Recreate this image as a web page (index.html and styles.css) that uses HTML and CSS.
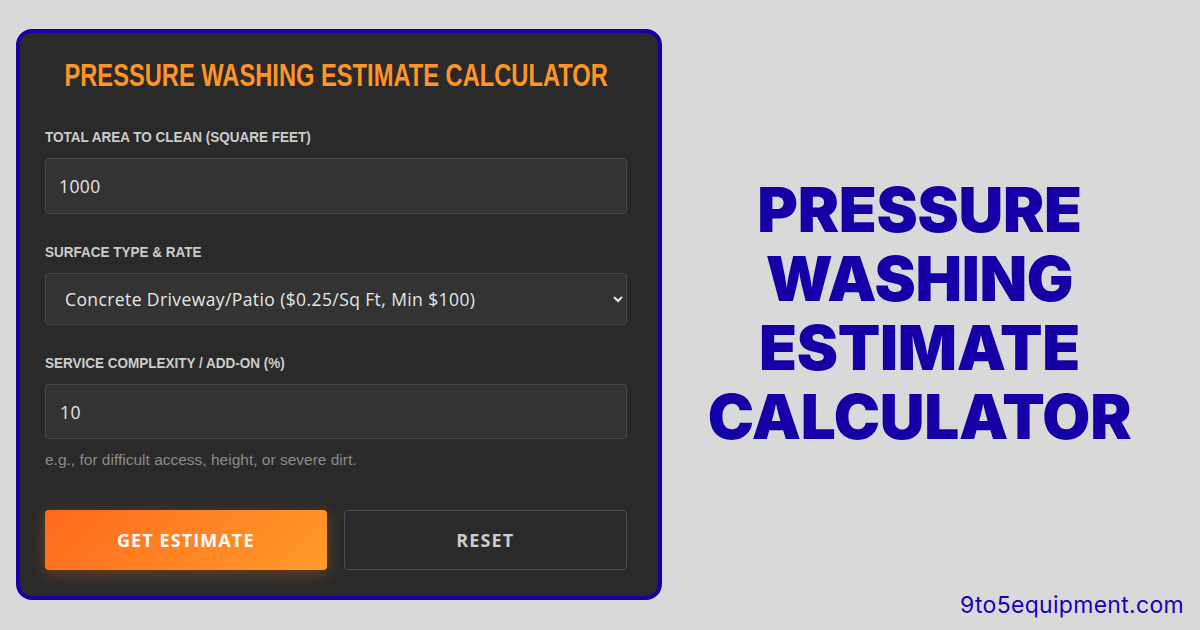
FILE: index.html
```html
<!DOCTYPE html>
<html lang="en">
<head>
    <meta charset="UTF-8">
    <title>Pressure Washing Estimate Calculator</title>
    <link rel="stylesheet" href="styles.css">
</head>
<body>

    <!-- calculator card -->
    <div class="calc-card">
        <h2 class="calc-title"><span>PRESSURE WASHING ESTIMATE CALCULATOR</span></h2>

        <div class="field">
            <label class="field-label"><span>TOTAL AREA TO CLEAN (SQUARE FEET)</span></label>
            <div class="field-box">1000</div>
        </div>

        <div class="field">
            <label class="field-label"><span>SURFACE TYPE &amp; RATE</span></label>
            <div class="field-box select-box">
                <span>Concrete Driveway/Patio ($0.25/Sq Ft, Min $100)</span>
                <svg class="chevron" width="10" height="7" viewBox="0 0 10 7">
                    <path d="M1.5 1.5 L5 5 L8.5 1.5" fill="none" stroke="#eee" stroke-width="2" stroke-linecap="round"/>
                </svg>
            </div>
        </div>

        <div class="field">
            <label class="field-label"><span>SERVICE COMPLEXITY / ADD-ON (%)</span></label>
            <div class="field-box short-box">10</div>
            <div class="field-hint">e.g., for difficult access, height, or severe dirt.</div>
        </div>

        <div class="buttons">
            <button class="btn btn-main">GET ESTIMATE</button>
            <button class="btn btn-reset">RESET</button>
        </div>
    </div>

    <!-- headline -->
    <div class="headline">
        <h1>PRESSURE<br>WASHING<br>ESTIMATE<br>CALCULATOR</h1>
    </div>

    <div class="site">9to5equipment.com</div>

</body>
</html>
```

FILE: styles.css
```css
body {
    margin: 0;
    width: 1200px;
    height: 630px;
    background-color: #d9d9d9;
    display: flex;
    align-items: flex-start;
    font-family: "Open Sans", sans-serif;
    position: relative;
    overflow: hidden;
}

/* 卡片 */
.calc-card {
    width: 646px;
    height: 571px;
    box-sizing: border-box;
    margin: 29px 0 0 16px;
    padding: 0 31px 0 25px;
    background-color: #2a2a2a;
    border: 4px solid #1500a8;
    border-radius: 16px;
}

.calc-title {
    display: flex;
    justify-content: center;
    margin: 24px 0 36px;
    color: #ff9526;
    font-family: "Liberation Sans", Arial, sans-serif;
    font-size: 32px;
    font-weight: bold;
    line-height: 36px;
    white-space: nowrap;
}

/* 窄体文字 */
.calc-title span {
    display: inline-block;
    transform: scaleX(0.74);
}

.field {
    margin-bottom: 30px;
}

.field-label {
    display: block;
    margin-bottom: 13px;
    color: #cccccc;
    font-family: "Liberation Sans", Arial, sans-serif;
    font-size: 15px;
    font-weight: bold;
    line-height: 16px;
    white-space: nowrap;
}

.field-label span {
    display: inline-block;
    transform: scaleX(0.9);
    transform-origin: left;
}

.field-box {
    height: 56px;
    box-sizing: border-box;
    display: flex;
    align-items: center;
    padding: 0 13px;
    background-color: #333333;
    border: 1px solid #474747;
    border-radius: 4px;
    color: #e6e6e6;
    font-size: 17.5px;
    letter-spacing: 0.4px;
}

.select-box {
    height: 52px;
    padding: 0 3px 0 19px;
    justify-content: space-between;
}

.short-box {
    height: 55px;
    padding: 0 14px;
}

.field-hint {
    margin-top: 12px;
    color: #8a8a8a;
    font-family: "Liberation Sans", Arial, sans-serif;
    font-size: 15.5px;
    line-height: 18px;
}

.buttons {
    display: flex;
    gap: 17px;
    margin-top: 41px;
}

.btn {
    flex: 1;
    height: 60px;
    border-radius: 4px;
    font-family: "Open Sans", sans-serif;
    font-size: 18px;
    font-weight: bold;
    letter-spacing: 1.1px;
    cursor: pointer;
}

.btn-main {
    border: none;
    color: white;
    background: linear-gradient(135deg, #ff6a1c, #ff9b2b);
    box-shadow: 0 4px 15px rgba(255, 120, 30, 0.3);
}

.btn-reset {
    background-color: #2a2a2a;
    border: 1px solid #4e4e4e;
    color: #cccccc;
}

/* 右侧标题 */
.headline {
    flex: 1;
    text-align: center;
    padding-top: 175px;
    padding-right: 23px;
}

.headline h1 {
    margin: 0;
    color: #1500a8;
    font-family: Inter, sans-serif;
    font-weight: 900;
    font-size: 62px;
    line-height: 69px;
    letter-spacing: -0.3px;
}

.site {
    position: absolute;
    right: 16px;
    bottom: 11px;
    color: #1a00b8;
    font-family: Inter, sans-serif;
    font-size: 23px;
    line-height: 28px;
    letter-spacing: 0.3px;
}
```
